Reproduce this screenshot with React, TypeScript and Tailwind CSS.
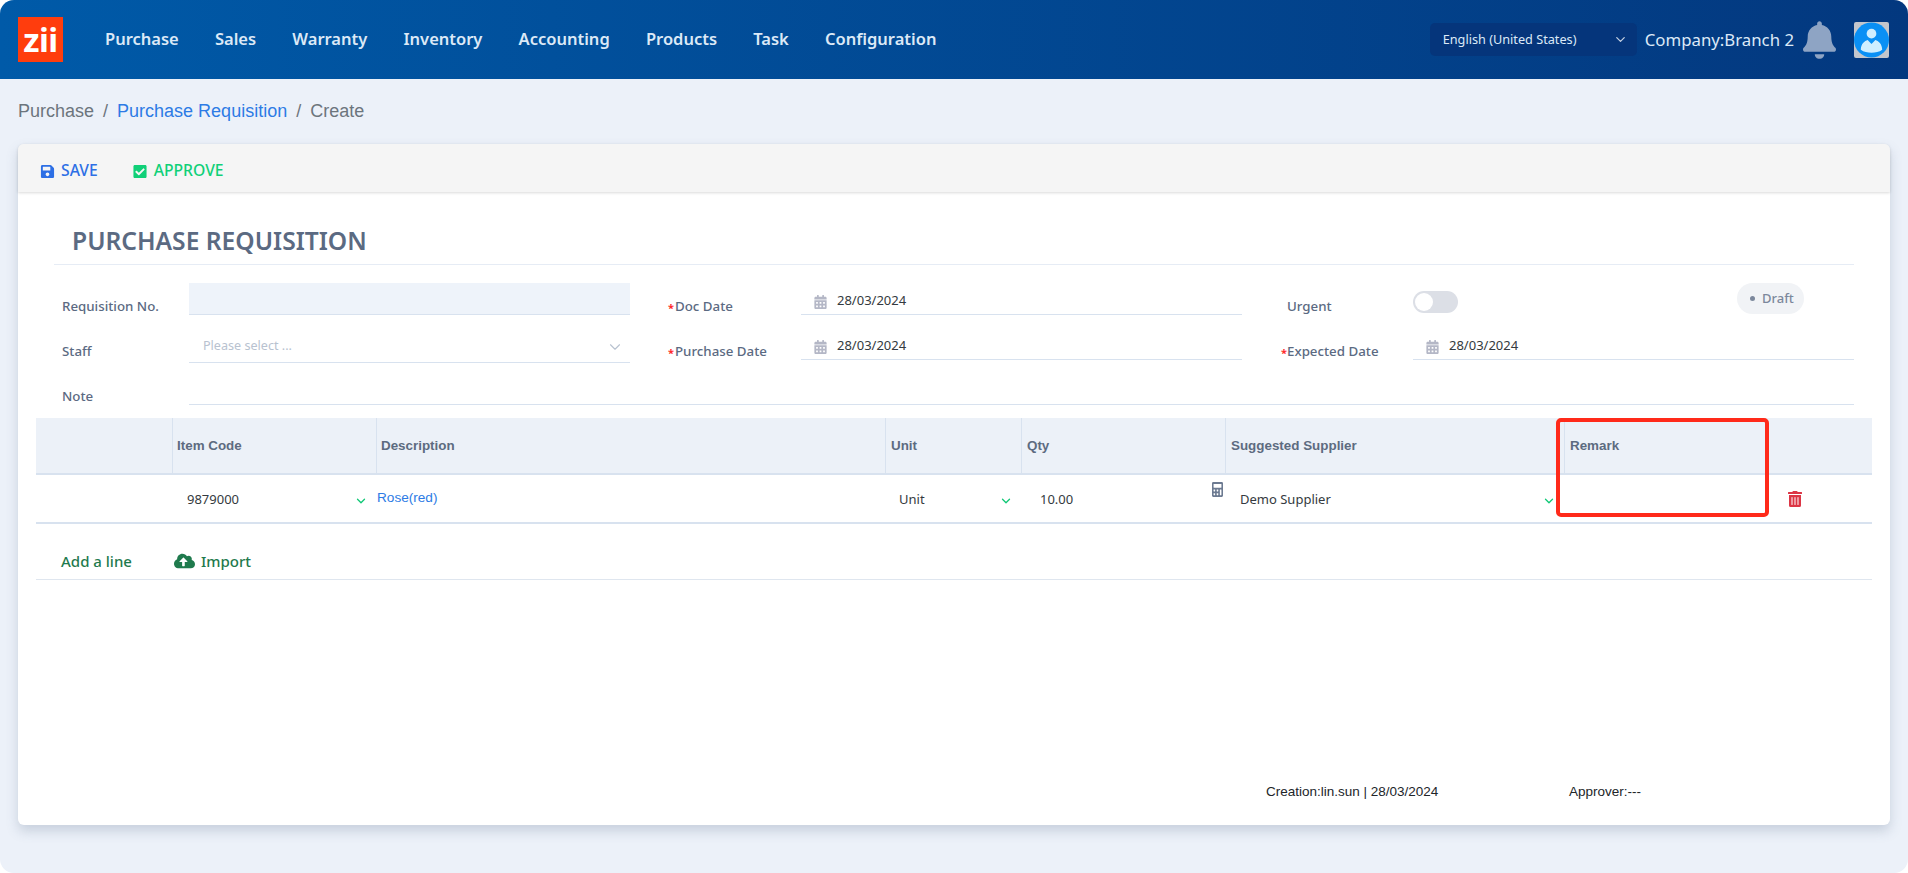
import React from "react";
import { ChevronDown } from "lucide-react";
import { FaBell, FaSave, FaCheckSquare, FaCalendarAlt, FaCalculator, FaTrashAlt, FaCloudUploadAlt } from "react-icons/fa";

const noto = "font-['Noto_Sans',sans-serif]";
const arial = "font-['Liberation_Sans',Arial,sans-serif]";

const NAV = ["Purchase", "Sales", "Warranty", "Inventory", "Accounting", "Products", "Task", "Configuration"];

function Label({ text, required, extra }: { text: string; required?: boolean; extra?: boolean }) {
  return (
    <div className={`relative mt-[12px] flex h-[24px] items-center text-[13.3px] font-medium text-[#5b6a82] ${required ? (extra ? "pl-[6px]" : "pl-[7px]") : extra ? "pl-[6px]" : ""}`}>
      {required && <span className="absolute left-0 top-[6px] text-[11px] font-bold leading-[14px] text-[#ff2a2a]">*</span>}
      {text}
    </div>
  );
}

function DateInput() {
  return (
    <div className="flex h-[32px] items-start border-b border-[#d8e2ef] pl-[13px] pt-[7px]">
      <FaCalendarAlt className="mt-[5px] h-[14px] w-[13px] text-[#b4b7c6]" />
      <span className="ml-[10px] text-[13px] leading-[20px] text-[#343a40]">28/03/2024</span>
    </div>
  );
}

function Th({ children, tight }: { children?: React.ReactNode; tight?: boolean }) {
  return (
    <div className={`flex items-start border-l border-[#d8e2ef] pt-[18px] text-[13.4px] font-bold leading-[20px] text-[#5d6b80] ${tight ? "pl-[4px]" : "pl-[5px]"} ${arial}`}>
      {children}
    </div>
  );
}

const Chev = () => <ChevronDown className="mt-[2px] h-[14px] w-[14px] text-[#10c876]" strokeWidth={2.2} />;

export default function App() {
  return (
    <div className={`relative h-[873px] w-[1908px] overflow-hidden bg-white ${noto}`}>
      <div className="flex h-full flex-col overflow-hidden rounded-[14px] bg-[#ecf1f9]">
        <header className="flex h-[79px] shrink-0 items-center bg-linear-to-r from-[#005aa8] to-[#03387f] pl-[18px] pr-[19px]">
          <div className="flex h-[45px] w-[45px] items-center justify-center bg-[#ff3d0d] text-[33px] font-bold leading-[45px] tracking-[-0.5px] text-white">
            zii
          </div>
          <nav className="ml-[42px] flex gap-[36.2px] text-[16.5px] font-semibold text-[#dce9f7]">
            {NAV.map((n) => (
              <span key={n}>{n}</span>
            ))}
          </nav>
          <div className="ml-auto flex h-[33px] w-[207px] items-center justify-between rounded-[5px] bg-[#05357b] pl-[13px] pr-[9px] text-[12.7px] text-[#dce9f7]">
            <span>English (United States)</span>
            <ChevronDown className="h-[15px] w-[15px] text-[#c4d0e2]" />
          </div>
          <span className="ml-[8px] whitespace-nowrap text-[16.8px] text-[#dce9f7]">Company:Branch 2</span>
          <FaBell className="ml-[9px] h-[38px] w-[33px] text-[#8ea4c4]" />
          <div className="ml-[18px] flex h-[36px] w-[35px] items-center justify-center rounded-[2px] bg-[#c3c6cc]">
            <svg viewBox="0 0 36 36" className="h-[36px] w-[35px]">
              <circle cx="18" cy="18" r="18" fill="#0a90f5" />
              <circle cx="18" cy="11.5" r="5" fill="#cfeeff" />
              <path d="M7 28c0-6 4-9 7-10l4 4 4-4c3 1 7 4 7 10-3 2.500-7 3-11 3s-8-.5-11-3z" fill="#cfeeff" />
            </svg>
          </div>
        </header>

        <div className={`flex h-[65px] shrink-0 items-center gap-[9px] pl-[18px] text-[18px] text-[#6c757d] ${arial}`}>
          <span>Purchase</span>
          <span>/</span>
          <span className="text-[#2d7be5]">Purchase Requisition</span>
          <span>/</span>
          <span>Create</span>
        </div>

        <main className="mx-[18px] flex h-[681px] flex-col rounded-[6px] bg-white shadow-[0_6px_12px_rgba(90,110,140,0.25)]">
          <div className="flex h-[48px] shrink-0 items-center rounded-t-[6px] bg-[#f5f5f5] pl-[22px] pt-[6px] text-[15.7px] font-medium shadow-[0_1px_3px_rgba(0,0,0,0.15)]">
            <FaSave className="h-[15px] w-[15px] text-[#2d6fe5]" />
            <span className="ml-[6px] text-[#2d6fe5]">SAVE</span>
            <FaCheckSquare className="ml-[35px] h-[15px] w-[14px] text-[#10d078]" />
            <span className="ml-[7px] text-[#10d078]">APPROVE</span>
          </div>

          <div className="mx-[36px] flex h-[73px] shrink-0 items-end border-b border-[#e6ecf5] pb-[7px] pl-[18px] text-[24.6px] font-semibold leading-[32px] text-[#5b6a82]">
            PURCHASE REQUISITION
          </div>

          <div className="ml-[44px] mt-[18px] grid grid-cols-[127px_441px_38px_133px_441px_39px_132px_441px] grid-rows-[45px_45px_45px]">
            <Label text="Requisition No." />
            <div className="h-[32px] border-b border-[#d8e2ef] bg-[#eef3fa]" />
            <div />
            <Label text="Doc Date" required />
            <DateInput />
            <div />
            <Label text="Urgent" extra />
            <div className="relative">
              <div className="mt-[8px] flex h-[22px] w-[45px] items-center rounded-full bg-[#dcdfe6] pl-[2px]">
                <div className="h-[18px] w-[18px] rounded-full bg-white" />
              </div>
              <div className="absolute left-[324px] top-0 flex h-[31px] w-[67px] items-center rounded-full bg-[#f1f3f6] pl-[13px] text-[13px] font-medium text-[#7c889c]">
                <span className="h-[5px] w-[5px] rounded-full bg-[#7c889c]" />
                <span className="ml-[7px]">Draft</span>
              </div>
            </div>

            <Label text="Staff" />
            <div className="flex h-[35px] items-start justify-between border-b border-[#d8e2ef] pl-[14px] pr-[6px] pt-[8px] text-[12.6px] leading-[20px] text-[#b8c2d0]">
              <span>Please select ...</span>
              <ChevronDown className="mt-[2px] h-[18px] w-[18px] text-[#b8c2d0]" strokeWidth={1.5} />
            </div>
            <div />
            <Label text="Purchase Date" required />
            <DateInput />
            <div />
            <Label text="Expected Date" required extra />
            <DateInput />

            <Label text="Note" />
            <div className="col-span-7 h-[32px] border-b border-[#d8e2ef]" />
          </div>

          <div className="mx-[18px] grid grid-cols-[136px_204px_509px_136px_204px_339px_1fr]">
            <div className="col-span-7 grid h-[57px] grid-cols-subgrid border-b-2 border-[#d8e2ef] bg-[#ecf1f8]">
              <div />
              <Th tight>Item Code</Th>
              <Th tight>Description</Th>
              <Th>Unit</Th>
              <Th>Qty</Th>
              <Th>Suggested Supplier</Th>
              <Th>Remark</Th>
            </div>
            <div className="relative col-span-7 grid h-[49px] grid-cols-subgrid border-b-2 border-[#d8e2ef] text-[13px] text-[#343a40]">
              <div />
              <div className="flex items-center justify-between pl-[15px] pr-[8px] pt-[3px]">
                <span>9879000</span>
                <Chev />
              </div>
              <div className={`pl-[1px] pt-[13px] text-[13.6px] leading-[20px] text-[#2d7be5] ${arial}`}>Rose(red)</div>
              <div className="flex items-center justify-between pl-[14px] pr-[8px] pt-[3px]">
                <span>Unit</span>
                <Chev />
              </div>
              <div className="relative flex items-center pl-[19px] pt-[3px]">
                <span>10.00</span>
                <FaCalculator preserveAspectRatio="none" className="absolute right-[2px] top-[7px] h-[15px] w-[11px] text-[#6c7a91]" />
              </div>
              <div className="flex items-center justify-between pl-[15px] pr-[8px] pt-[3px]">
                <span>Demo Supplier</span>
                <Chev />
              </div>
              <div className="flex items-center pl-[224px]">
                <FaTrashAlt className="h-[16px] w-[14px] text-[#dc3545]" />
              </div>
            </div>
            <div className="col-span-7 flex h-[56px] items-center border-b border-[#dfe6ef] pl-[25px] pt-[19px] text-[15px] font-medium text-[#1f7a4d]">
              <span>Add a line</span>
              <FaCloudUploadAlt className="ml-[42px] h-[18px] w-[21px]" />
              <span className="ml-[6px]">Import</span>
            </div>
          </div>

          <div className={`relative flex-1 text-[13.5px] leading-[20px] text-[#212529] ${arial}`}>
            <span className="absolute left-[1248px] top-[202px]">Creation:lin.sun | 28/03/2024</span>
            <span className="absolute left-[1551px] top-[202px]">Approver:---</span>
          </div>
        </main>
      </div>
      <div className="absolute left-[1556px] top-[418px] h-[99px] w-[213px] rounded-[5px] border-[4px] border-[#ff2a1a]" />
    </div>
  );
}
